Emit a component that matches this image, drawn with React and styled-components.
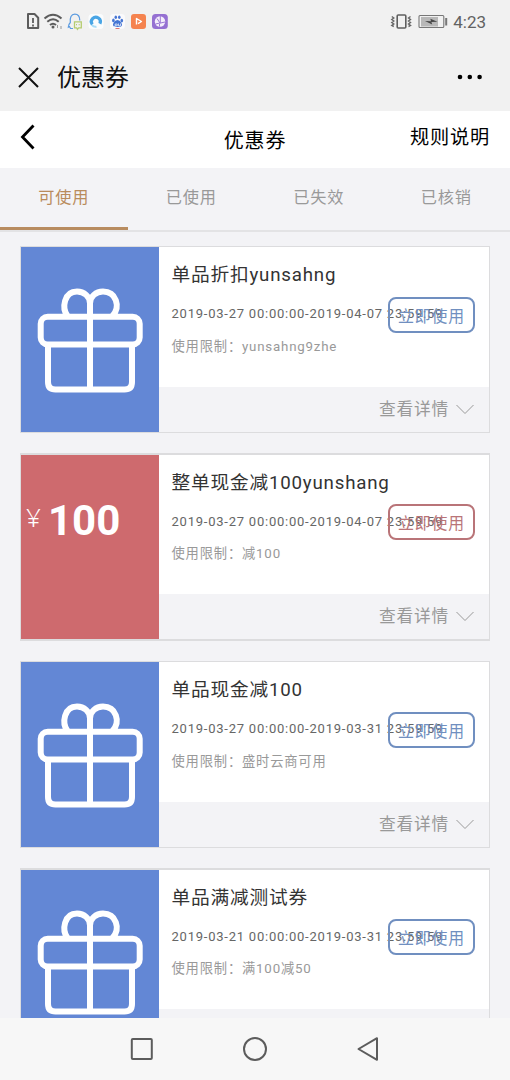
import styled, { createGlobalStyle } from "styled-components";

const GlobalStyle = createGlobalStyle`
  * {
    box-sizing: border-box;
    margin: 0;
    padding: 0;
  }

  body {
    font-family: Roboto, "Noto Sans CJK SC", sans-serif;
    background-color: #f3f3f6;
  }
`;

const PageEl = styled.div`
  display: flex;
  flex-direction: column;
  width: 510px;
  height: 1080px;
  overflow: hidden;
  background-color: #f3f3f6;
`;

const StatusBarEl = styled.div`
  flex: none;
  display: flex;
  justify-content: space-between;
  height: 43px;
  padding: 0 24px 0 26px;
  background-color: #f1f1f1;
`;

const StatusGroupEl = styled.div`
  display: flex;
  align-items: center;

  svg {
    display: block;
  }
`;

const TimeEl = styled.span`
  margin-left: 5px;
  padding-top: 1px;
  font-size: 17px;
  line-height: 20px;
  color: #626262;
`;

const AppBarEl = styled.header`
  flex: none;
  display: flex;
  align-items: center;
  height: 68px;
  padding: 0 27px 0 18px;
  background-color: #f1f1f1;
`;

const AppTitleEl = styled.h1`
  flex: 1;
  margin-left: 18px;
  padding-top: 2px;
  font-size: 24px;
  font-weight: 400;
  line-height: 36px;
  color: #111;
`;

const HeaderEl = styled.div`
  flex: none;
  display: grid;
  grid-template-columns: 1fr auto 1fr;
  height: 57px;
  padding: 0 20px;
  background-color: #fff;
  color: #000;

  svg {
    margin-top: 13px;
  }
`;

const HeaderTitleEl = styled.h2`
  padding-top: 15px;
  font-size: 20px;
  font-weight: 400;
  line-height: 30px;
  letter-spacing: 0.8px;
`;

const RulesEl = styled.a`
  justify-self: end;
  padding-top: 12px;
  font-size: 19.2px;
  line-height: 30px;
  letter-spacing: 0.8px;
`;

const TabsEl = styled.nav`
  flex: none;
  display: grid;
  grid-template-columns: repeat(4, 1fr);
  height: 64px;
  border-bottom: 2px solid #e3e3e5;
`;

const TabEl = styled.button`
  border: none;
  border-bottom: 3px solid
    ${({ $active }) => ($active ? "#b88c60" : "transparent")};
  background: none;
  padding-bottom: 3px;
  font-family: inherit;
  font-size: 16.2px;
  letter-spacing: 0.8px;
  color: ${({ $active }) => ($active ? "#b98b5c" : "#999")};
`;

const ListEl = styled.main`
  flex: 1;
  min-height: 0;
  overflow: hidden;
  display: flex;
  flex-direction: column;
  gap: 20px;
  padding: 14px 20px 0;
`;

const CardEl = styled.article`
  flex: none;
  display: flex;
  height: ${({ $thick }) => ($thick ? 188 : 187)}px;
  border: 1px solid #dcdcde;
  border-width: ${({ $thick }) => ($thick ? "2px 1px" : "1px")};
`;

const GiftPanelEl = styled.div`
  flex: none;
  width: 138px;
  padding: ${({ $thick }) => ($thick ? 39 : 40)}px 0 0 16px;
  background-color: #6387d5;
`;

const CashPanelEl = styled.div`
  flex: none;
  display: flex;
  align-items: flex-start;
  width: 138px;
  padding: 41px 0 0 5px;
  background-color: #ce6a6e;
  color: #fff;
`;

const CurrencyEl = styled.span`
  width: 22px;
  padding-top: 5px;
  font-family: "Noto Sans", sans-serif;
  font-size: 26px;
  font-weight: 300;
  line-height: 32px;
`;

const AmountEl = styled.strong`
  font-size: 42px;
  font-weight: 700;
  line-height: 50px;
`;

const BodyEl = styled.div`
  flex: 1;
  display: flex;
  flex-direction: column;
`;

const InfoEl = styled.div`
  position: relative;
  height: ${({ $thick }) => ($thick ? 139 : 140)}px;
  padding: 13px 0 0 12.5px;
  background-color: #fff;
  white-space: nowrap;
`;

const NameEl = styled.h3`
  font-size: 18.7px;
  font-weight: 400;
  line-height: 30px;
  letter-spacing: 0.8px;
  color: #333;
`;

const DateEl = styled.p`
  margin-top: 14px;
  font-size: 13px;
  line-height: 20px;
  letter-spacing: 0.77px;
  color: #666;
`;

const LimitEl = styled.p`
  margin-top: ${({ $thick }) => ($thick ? 12 : 13)}px;
  font-size: 13.3px;
  line-height: 20px;
  letter-spacing: 0.8px;
  color: #999;
`;

// the button sits over the end of the date line
const UseButtonEl = styled.button`
  position: absolute;
  top: ${({ $thick }) => ($thick ? 49 : 50)}px;
  right: 14px;
  width: 87px;
  height: 36px;
  padding-top: 1px;
  border: 2px solid currentColor;
  border-radius: 8px;
  background: none;
  font-family: inherit;
  font-size: 15.9px;
  letter-spacing: 0.8px;
  color: ${({ $cash }) => ($cash ? "#b97478" : "#708fc0")};
`;

const DetailEl = styled.div`
  flex: 1;
  display: flex;
  align-items: center;
  justify-content: flex-end;
  gap: 7px;
  padding: 0 15px 4px 0;
  font-size: 16.7px;
  letter-spacing: 0.8px;
  color: #999;

  svg {
    margin-top: 3px;
  }
`;

const NavBarEl = styled.footer`
  flex: none;
  display: flex;
  align-items: center;
  justify-content: center;
  gap: 89px;
  height: 62px;
  background-color: #f7f7f7;
`;

const coupons = [
  {
    name: "单品折扣yunsahng",
    date: "2019-03-27 00:00:00-2019-04-07 23:59:59",
    limit: "yunsahng9zhe",
  },
  {
    name: "整单现金减100yunshang",
    date: "2019-03-27 00:00:00-2019-04-07 23:59:59",
    limit: "减100",
    amount: 100,
  },
  {
    name: "单品现金减100",
    date: "2019-03-27 00:00:00-2019-03-31 23:59:59",
    limit: "盛时云商可用",
  },
  {
    name: "单品满减测试券",
    date: "2019-03-21 00:00:00-2019-03-31 23:59:59",
    limit: "满100减50",
  },
];

const tabs = ["可使用", "已使用", "已失效", "已核销"];

const NoticeIcons = function () {
  return (
    <svg width="144" height="18" viewBox="26 13 144 18" fill="none">
      <path
        d="M28 14h6.5l3.7 3.7V28H28z"
        stroke="#5c5c5c"
        strokeWidth="2"
        strokeLinejoin="round"
      />
      <path d="M33 18v5M33 24.5v2" stroke="#5c5c5c" strokeWidth="1.8" />

      <g stroke="#5c5c5c" strokeWidth="2">
        <path d="M44.5 18.5q8.5-7.5 17 0M47.3 21.8q5.8-5 11.4 0M50 25q3-2.6 6 0" />
      </g>
      <circle cx="53" cy="27" r="1.5" fill="#5c5c5c" />
      <path d="M57.5 25v3M61 26v3" stroke="#999" strokeWidth="1" />

      <path
        d="M73 28.5h-2.500l-1-2-1.200.7c0-2 .6-3.300 2-4.700-.5-5 .8-8.300 4.500-8.300s5 2.500 5 6.300"
        stroke="#5b9be0"
        strokeWidth="1.2"
      />
      <path
        d="M74.5 21.8h6.800v6h-2.600l-1.300 1.500-.8-1.500h-2.100z"
        stroke="#b5cc70"
        strokeWidth="1.3"
      />
      <path d="M76.5 24v1.300M79.2 24v1.300" stroke="#b5cc70" />

      <rect x="88.5" y="14" width="15" height="15" rx="3.5" fill="#fafcfd" />
      <path
        d="M92.3 24.500a4.500 4.500 0 1 1 7.600-.8"
        stroke="#49a5e5"
        strokeWidth="3.2"
      />
      <path
        d="M91.800 24.800c1.200 1.600 3 2.200 4.700 1.900"
        stroke="#a8dcf6"
        strokeWidth="2"
      />

      <rect x="110" y="14" width="15" height="15" rx="3.5" fill="#fafafc" />
      <g fill="#4676d4">
        <ellipse cx="113.4" cy="20.4" rx="1.3" ry="1.9" />
        <ellipse cx="115.8" cy="17.2" rx="1.3" ry="1.8" />
        <ellipse cx="119.3" cy="17.2" rx="1.3" ry="1.8" />
        <ellipse cx="121.8" cy="20.6" rx="1.3" ry="1.9" />
        <path d="M117.5 20c2 0 4.700 3 4.500 5-.2 2-2.500 1.900-4.500 1.900s-4.300.1-4.500-1.900c-.2-2 2.500-5 4.500-5z" />
      </g>
      <path
        d="M115.2 24h2v1.800h-2zM118.5 23.500v2.300h2v-2.300"
        stroke="#fff"
        strokeWidth=".7"
      />
      <path d="M115.5 28.500h4" stroke="#d66" strokeWidth=".9" />

      <rect x="131" y="14" width="15" height="15" rx="3" fill="#f5834f" />
      <path
        d="M136.5 24.500v-6l5 3-3.500 2.200"
        stroke="#fff"
        strokeWidth="1.4"
        strokeLinejoin="round"
      />

      <rect x="152" y="14" width="15.8" height="15" rx="3.5" fill="#9570d2" />
      <circle cx="160" cy="21.5" r="5.2" fill="#f4edfb" />
      <path
        d="M160.3 16v7.500M157 18.500l3 4.500-4.500 1M160.5 23l4.500-1M159.5 24v2.500"
        stroke="#9b78d5"
        strokeWidth="1"
      />
    </svg>
  );
};

const DeviceIcons = function () {
  return (
    <svg width="58" height="18" viewBox="391 13 58 18" fill="none">
      <rect
        x="398.2"
        y="15"
        width="8.6"
        height="13"
        rx="1"
        stroke="#5f5f5f"
        strokeWidth="1.6"
      />
      <path
        d="M392.800 16.500l2 1.500-2 1.500 2 1.500-2 1.500 2 1.500-2 1.500 2 1M411.500 16.500l-2 1.500 2 1.500-2 1.500 2 1.500-2 1.500 2 1.500-2 1"
        stroke="#666"
        strokeWidth="1.4"
      />
      <rect
        x="420"
        y="15.5"
        width="24.8"
        height="12"
        rx="1"
        stroke="#777"
        strokeWidth="1.1"
      />
      <rect x="422" y="17" width="17" height="9.5" fill="#b8b8b8" />
      <path d="M426 21l6 .2-.6-2.400 7 3-6 .1.8 2.600z" fill="#484848" />
      <path d="M447.2 18v7.500" stroke="#777" strokeWidth="2" />
    </svg>
  );
};

const GiftIcon = function () {
  return (
    <svg
      width="106"
      height="106"
      viewBox="37 287 106 106"
      fill="none"
      stroke="#fff"
      strokeWidth="6"
    >
      <rect x="40.7" y="316.8" width="99" height="27.7" rx="7" />
      <path d="M48 344v38q0 7.500 7.500 7.500h69q7.500 0 7.500-7.500v-38M90 297v95" />
      <path d="M67.5 316c-6-8-3.500-24.500 9.500-24.500 7 0 13 5 13 12 0-7 6-12 13-12 13 0 18 15 9.500 24.500" />
    </svg>
  );
};

const Coupon = function ({ coupon, thick }) {
  const cash = Boolean(coupon.amount);

  return (
    <CardEl $thick={thick}>
      {cash ? (
        <CashPanelEl>
          <CurrencyEl>¥</CurrencyEl>
          <AmountEl>{coupon.amount}</AmountEl>
        </CashPanelEl>
      ) : (
        <GiftPanelEl $thick={thick}>
          <GiftIcon />
        </GiftPanelEl>
      )}
      <BodyEl>
        <InfoEl $thick={thick}>
          <NameEl>{coupon.name}</NameEl>
          <DateEl>{coupon.date}</DateEl>
          <LimitEl $thick={thick}>使用限制：{coupon.limit}</LimitEl>
          <UseButtonEl $cash={cash} $thick={thick}>
            立即使用
          </UseButtonEl>
        </InfoEl>
        <DetailEl>
          查看详情
          <svg width="18" height="11" fill="none" stroke="#999">
            <path d="M.5 1l8.500 8.500L17.500 1" />
          </svg>
        </DetailEl>
      </BodyEl>
    </CardEl>
  );
};

export default function App() {
  return (
    <PageEl>
      <GlobalStyle />
      <StatusBarEl>
        <StatusGroupEl>
          <NoticeIcons />
        </StatusGroupEl>
        <StatusGroupEl>
          <DeviceIcons />
          <TimeEl>4:23</TimeEl>
        </StatusGroupEl>
      </StatusBarEl>

      <AppBarEl>
        <svg width="21" height="21" stroke="#111" strokeWidth="2">
          <path d="M1 1l19 19M20 1L1 20" />
        </svg>
        <AppTitleEl>优惠券</AppTitleEl>
        <svg width="26" height="6" fill="#000">
          <circle cx="3" cy="3" r="2.3" />
          <circle cx="12.8" cy="3" r="2.3" />
          <circle cx="22.6" cy="3" r="2.3" />
        </svg>
      </AppBarEl>

      <HeaderEl>
        <svg width="16" height="26" fill="none" stroke="#000">
          <path d="M13.5 1.500L2.500 13l11 11.500" strokeWidth="2.8" />
        </svg>
        <HeaderTitleEl>优惠券</HeaderTitleEl>
        <RulesEl>规则说明</RulesEl>
      </HeaderEl>

      <TabsEl>
        {tabs.map((tab, i) => (
          <TabEl key={tab} $active={i === 0}>
            {tab}
          </TabEl>
        ))}
      </TabsEl>

      <ListEl>
        {coupons.map((coupon, i) => (
          <Coupon key={coupon.name} coupon={coupon} thick={i % 2 === 1} />
        ))}
      </ListEl>

      <NavBarEl>
        <svg width="24" height="26" fill="none" stroke="#5c5c5c">
          <rect x="2.8" y="3" width="20" height="20" rx="1" strokeWidth="2" />
        </svg>
        <svg width="26" height="26" fill="none" stroke="#5c5c5c">
          <circle cx="13" cy="13" r="11" strokeWidth="2" />
        </svg>
        <svg width="24" height="26" fill="none" stroke="#5c5c5c">
          <path
            d="M20 2.200v21.600L1.500 13z"
            strokeWidth="2"
            strokeLinejoin="round"
          />
        </svg>
      </NavBarEl>
    </PageEl>
  );
}
